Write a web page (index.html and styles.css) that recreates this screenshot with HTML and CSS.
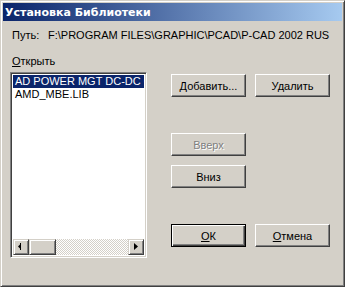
FILE: index.html
```html
<!DOCTYPE html>
<html lang="ru">
<head>
<meta charset="utf-8">
<title>Установка Библиотеки</title>
<link rel="stylesheet" href="styles.css">
</head>
<body>
<div class="window">
  <div class="titlebar"><span class="title">Установка Библиотеки</span></div>
  <div class="content">
    <div class="path-row">
      <span class="path-label">Путь:</span>
      <span class="path-value">F:\PROGRAM FILES\GRAPHIC\PCAD\P-CAD 2002 RUS</span>
    </div>
    <div class="open-label accel">Открыть</div>
    <div class="main">
      <div class="listbox">
        <div class="items">
          <div class="item selected">AD POWER MGT DC-DC CONVERTERS.LIB</div>
          <div class="item">AMD_MBE.LIB</div>
        </div>
        <div class="hscroll">
          <div class="sbtn"><svg width="16" height="16" viewBox="0 0 16 16"><path d="M5 7.5 L8 4.5 L8 10.5 Z" fill="#000"/><rect x="7" y="4" width="1" height="7" fill="#000"/></svg></div>
          <div class="thumb"></div>
          <div class="track"></div>
          <div class="sbtn"><svg width="16" height="16" viewBox="0 0 16 16"><path d="M6 4 L6 11 L10 7.5 Z" fill="#000"/></svg></div>
        </div>
      </div>
      <div class="buttons">
        <div class="btn-row row-top">
          <div class="btn"><span class="accel">Добавить...</span></div>
          <div class="btn"><span>Удалить</span></div>
        </div>
        <div class="btn-row row-up">
          <div class="btn disabled"><span>Вверх</span></div>
        </div>
        <div class="btn-row row-down">
          <div class="btn"><span>Вниз</span></div>
        </div>
        <div class="btn-row row-ok">
          <div class="btn default"><span class="accel">ОК</span></div>
          <div class="btn"><span class="accel">Отмена</span></div>
        </div>
      </div>
    </div>
  </div>
</div>
</body>
</html>
```

FILE: styles.css
```css
html, body {
  margin: 0;
  padding: 0;
  background: #d4d0c8;
}
body {
  font-family: "Liberation Sans", Arial, sans-serif;
  font-size: 11px;
  color: #000;
}
.window {
  width: 345px;
  height: 287px;
  box-sizing: border-box;
  background: #d4d0c8;
  border-top: 1px solid #d4d0c8;
  border-left: 1px solid #d4d0c8;
  border-right: 1px solid #404040;
  border-bottom: 1px solid #404040;
  padding: 2px;
  box-shadow: inset 1px 1px 0 #ffffff, inset -1px -1px 0 #808080;
  display: flex;
  flex-direction: column;
}
.titlebar {
  height: 18px;
  background: linear-gradient(to right, #0a246a, #a6caf0);
  display: flex;
  align-items: center;
  padding-left: 2px;
  flex: none;
}
.title {
  color: #fff;
  font-weight: bold;
  font-size: 11px;
  font-family: "DejaVu Sans", "Liberation Sans", sans-serif;
}
.content {
  padding-left: 7px;
  display: flex;
  flex-direction: column;
}
.path-row {
  margin-top: 8px;
  height: 13px;
  line-height: 13px;
  display: flex;
  padding-left: 2px;
}
.path-label {
  width: 36px;
}
.open-label {
  margin-top: 13px;
  height: 13px;
  line-height: 13px;
  padding-left: 2px;
}
.accel {
  display: block;
}
.accel::first-letter {
  text-decoration: underline;
}
.main {
  display: flex;
  margin-top: 4px;
}
.listbox {
  width: 137px;
  height: 186px;
  box-sizing: border-box;
  background: #fff;
  border-top: 1px solid #808080;
  border-left: 1px solid #808080;
  border-right: 1px solid #fff;
  border-bottom: 1px solid #fff;
  box-shadow: inset 1px 1px 0 #404040, inset -1px -1px 0 #d4d0c8;
  padding: 2px;
  display: flex;
  flex-direction: column;
  flex: none;
}
.items {
  flex: 1;
  overflow: hidden;
}
.item {
  height: 13px;
  line-height: 13px;
  white-space: nowrap;
  padding-left: 2px;
  font-size: 11px;
}
.item.selected {
  background: #0a246a;
  color: #fff;
}
.hscroll {
  height: 16px;
  display: flex;
  flex: none;
}
.sbtn, .thumb {
  box-sizing: border-box;
  background: #d4d0c8;
  border-top: 1px solid #d4d0c8;
  border-left: 1px solid #d4d0c8;
  border-right: 1px solid #404040;
  border-bottom: 1px solid #404040;
  box-shadow: inset 1px 1px 0 #fff, inset -1px -1px 0 #808080;
  height: 16px;
}
.sbtn {
  width: 16px;
  position: relative;
}
.sbtn svg {
  position: absolute;
  left: -1px;
  top: -1px;
}
.thumb {
  width: 27px;
}
.track {
  flex: 1;
  background-color: #fff;
  background-image: conic-gradient(#d4d0c8 25%, #fff 0 50%, #d4d0c8 0 75%, #fff 0);
  background-size: 2px 2px;
}
.buttons {
  margin-left: 24px;
  display: flex;
  flex-direction: column;
}
.btn-row {
  display: flex;
  gap: 9px;
}
.row-top { margin-top: 2px; }
.row-up { margin-top: 36px; }
.row-down { margin-top: 9px; }
.row-ok { margin-top: 36px; }
.btn {
  width: 75px;
  height: 23px;
  box-sizing: border-box;
  background: #d4d0c8;
  border-top: 1px solid #fff;
  border-left: 1px solid #fff;
  border-right: 1px solid #404040;
  border-bottom: 1px solid #404040;
  box-shadow: inset -1px -1px 0 #808080;
  display: flex;
  align-items: center;
  justify-content: center;
  font-size: 11px;
}
.btn.default {
  border: 1px solid #000;
  box-shadow: inset 1px 1px 0 #fff, inset -1px -1px 0 #404040, inset -2px -2px 0 #808080;
}
.btn.disabled {
  color: #808080;
  text-shadow: 1px 1px 0 #fff;
}
```
